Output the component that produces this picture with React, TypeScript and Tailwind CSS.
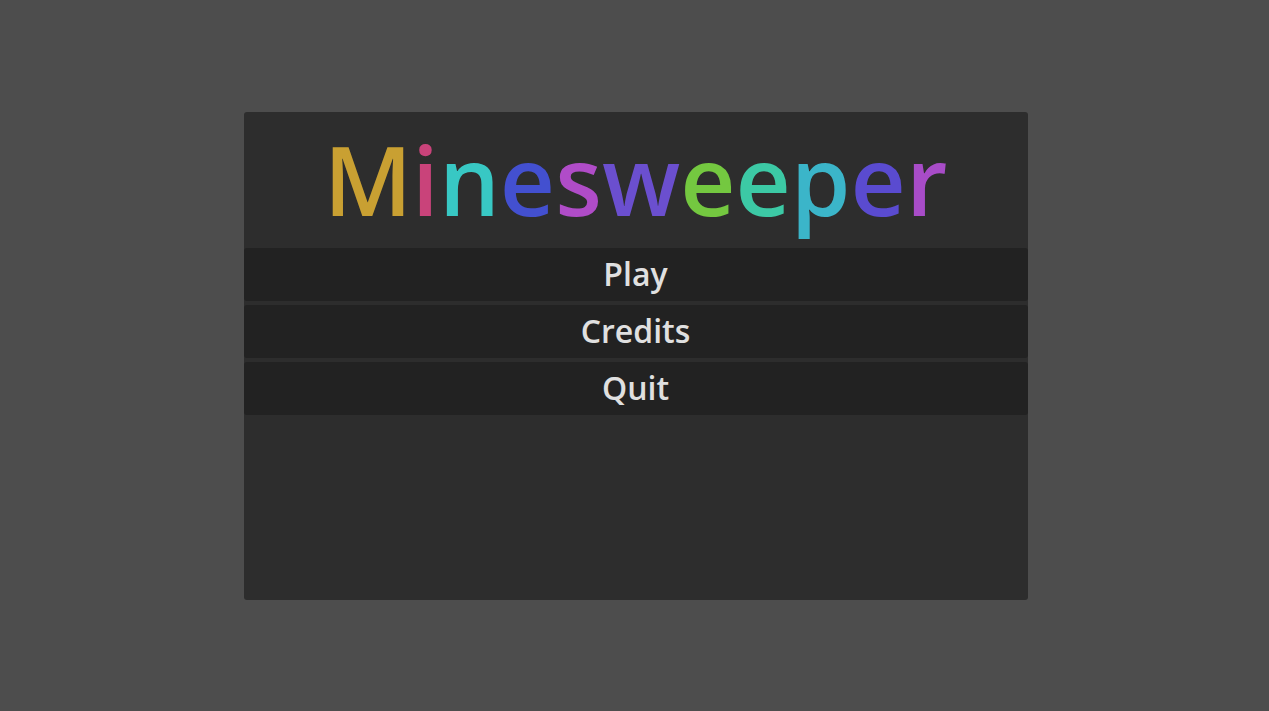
const letters: [string, string][] = [
  ['M', 'text-[#c9a032]'],
  ['i', 'text-[#c9437a]'],
  ['n', 'text-[#38c8c4]'],
  ['e', 'text-[#4350d0]'],
  ['s', 'text-[#b04cc8]'],
  ['w', 'text-[#6b4fcf]'],
  ['e', 'text-[#74c840]'],
  ['e', 'text-[#3cc9a5]'],
  ['p', 'text-[#3bb5c9]'],
  ['e', 'text-[#5a4bd0]'],
  ['r', 'text-[#a84cc8]'],
];

const MenuButton = ({ label }: { label: string }) => (
  <button className="h-[53px] w-full rounded-[3px] bg-[#222222] text-[32px] font-semibold leading-none text-[#e0e0e0]">
    {label}
  </button>
);

export default function App() {
  return (
    <div
      className="flex h-screen w-full items-center justify-center bg-[#4d4d4d] pl-[2px]"
      style={{ fontFamily: '"Open Sans", "Noto Sans", sans-serif' }}
    >
      <div className="flex h-[488px] w-[784px] flex-col rounded-[3px] bg-[#2d2d2d]">
        <h1 className="flex h-[136px] items-center justify-center pb-[2px] text-[96px] font-semibold leading-none">
          {letters.map(([ch, color], i) => (
            <span key={i} className={color}>
              {ch}
            </span>
          ))}
        </h1>
        <div className="flex flex-col gap-[4px]">
          <MenuButton label="Play" />
          <MenuButton label="Credits" />
          <MenuButton label="Quit" />
        </div>
      </div>
    </div>
  );
}
